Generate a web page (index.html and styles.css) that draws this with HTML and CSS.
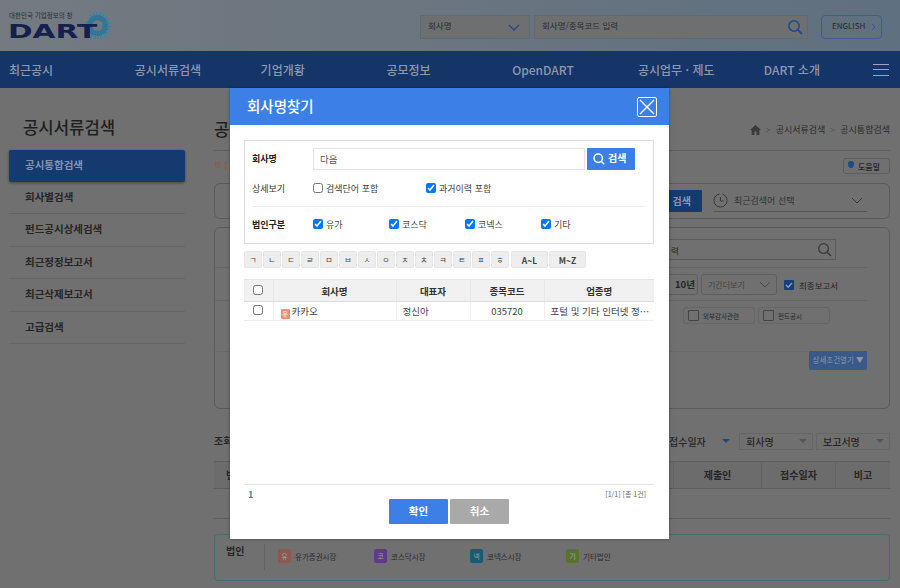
FILE: index.html
```html
<!DOCTYPE html>
<html lang="ko">
  <head>
    <meta charset="UTF-8" />
    <title>회사명찾기</title>
    <link rel="stylesheet" href="styles.css">
  </head>

  <body>
    <div class="page">
      <header class="top">
        <div class="logo">
          <span class="logo-sub">대한민국 기업정보의 창</span>
          <span class="logo-name">DART</span>
          <svg class="logo-sun" viewBox="0 0 26 26">
            <circle cx="13" cy="13" r="11" fill="none" stroke="#2f86ab" stroke-width="3.6" stroke-dasharray="1 1" pathLength="44" transform="rotate(-130 13 13)"/>
            <circle cx="13" cy="13" r="7.5" fill="none" stroke="#23759f" stroke-width="5" stroke-dasharray="1.2 .35" transform="rotate(-70 13 13)"/>
            <path d="M3 2.5A13 13 0 0 0 2 9" fill="none" stroke="#747a80" stroke-width="5"/>
          </svg>
        </div>
        <div class="top-search">
          <div class="top-select"><span>회사명</span>
            <svg width="12" height="7" viewBox="0 0 12 7"><path d="M1 1l5 5 5-5" fill="none" stroke="#1f4b87" stroke-width="1.3"/></svg>
          </div>
          <div class="top-input"><span>회사명/종목코드 입력</span>
            <svg width="16" height="16" viewBox="0 0 16 16"><circle cx="7" cy="7" r="5.2" fill="none" stroke="#1f4b87" stroke-width="1.6"/><path d="M11 11l4 4" stroke="#1f4b87" stroke-width="1.8"/></svg>
          </div>
          <div class="top-lang"><span>ENGLISH</span>
            <svg width="5" height="8" viewBox="0 0 5 8"><path d="M1 1l3 3-3 3" fill="none" stroke="#2c5a96"/></svg>
          </div>
        </div>
      </header>

      <nav class="gnb">
        <a>최근공시</a>
        <a>공시서류검색</a>
        <a>기업개황</a>
        <a>공모정보</a>
        <a>OpenDART</a>
        <a>공시업무 · 제도</a>
        <a>DART 소개</a>
        <span class="burger"><i></i><i></i><i></i></span>
      </nav>

      <div class="content">
        <aside class="side">
          <h2>공시서류검색</h2>
          <ul>
            <li class="on">공시통합검색</li>
            <li>회사별검색</li>
            <li>펀드공시상세검색</li>
            <li>최근정정보고서</li>
            <li>최근삭제보고서</li>
            <li>고급검색</li>
          </ul>
        </aside>

        <main class="main">
          <div class="main-head">
            <h3>공시통합검색</h3>
            <div class="crumbs">
              <svg width="11" height="10" viewBox="0 0 11 10"><path d="M5.5 0L0 5h1.6v5h2.9V6.6h2V10h2.9V5H11z" fill="#3a3a3a"/></svg>
              <em>&gt;</em>공시서류검색<em>&gt;</em>공시통합검색
            </div>
          </div>

          <div class="notice">
            <span class="notice-text">※ [</span>
            <span class="help"><b></b>도움말</span>
          </div>

          <div class="box box-recent">
            <span class="dark-btn">검색</span>
            <div class="recent">
              <svg width="15" height="15" viewBox="0 0 15 15"><circle cx="7.5" cy="7.5" r="6.6" fill="none" stroke="#3a3a3a" stroke-dasharray="30 3"/><path d="M7.5 4v4h3" fill="none" stroke="#3a3a3a"/></svg>
              최근검색어 선택
              <svg class="recent-arrow" width="12" height="7" viewBox="0 0 12 7"><path d="M1 1l5 5 5-5" fill="none" stroke="#3a3a3a"/></svg>
            </div>
          </div>

          <div class="box box-form">
            <div class="form-row form-search">
              <div class="form-input">력
                <svg width="15" height="15" viewBox="0 0 16 16"><circle cx="7" cy="7" r="5.2" fill="none" stroke="#3a3a3a" stroke-width="1.4"/><path d="M11 11l4 4" stroke="#3a3a3a" stroke-width="1.6"/></svg>
              </div>
            </div>
            <div class="form-row form-period">
              <span class="year">10년</span>
              <span class="period">기간더보기
                <svg width="12" height="7" viewBox="0 0 12 7"><path d="M1 1l5 5 5-5" fill="none" stroke="#4c4c4c"/></svg>
              </span>
              <label class="final">
                <svg width="10" height="10" viewBox="0 0 10 10"><rect width="10" height="10" rx="1" fill="#143f80"/><path d="M2 5l2.2 2.2L8 3" fill="none" stroke="#8c99ad" stroke-width="1.5"/></svg>
                최종보고서
              </label>
            </div>
            <div class="form-row form-chips">
              <span class="chip"><i></i>외부감사관련</span>
              <span class="chip"><i></i>펀드공시</span>
            </div>
            <div class="form-more">
              <span>상세조건열기 ▼</span>
            </div>
          </div>

          <div class="sort">
            <span class="sort-label">조회</span>
            <span class="sort-item sort-active">접수일자</span>
            <span class="sort-item">회사명</span>
            <span class="sort-item">보고서명</span>
          </div>

          <div class="result-head">
            <span class="result-first">번</span>
            <span>제출인</span>
            <span>접수일자</span>
            <span>비고</span>
          </div>
          <div class="result-empty"></div>

          <div class="legend">
            <b>법인</b>
            <div class="legend-list">
              <span><i class="mark-y">유</i>유가증권시장</span>
              <span><i class="mark-k">코</i>코스닥시장</span>
              <span><i class="mark-n">넥</i>코넥스시장</span>
              <span><i class="mark-e">기</i>기타법인</span>
            </div>
          </div>
        </main>
      </div>

      <section class="modal">
        <div class="modal-head">
          <h4>회사명찾기</h4>
          <span class="modal-close">
            <svg width="18" height="18" viewBox="0 0 18 18"><path d="M2 2l14 14M16 2L2 16" stroke="#fff" stroke-width="1.4"/></svg>
          </span>
        </div>

        <div class="modal-body">
          <div class="find">
            <div class="find-row find-name">
              <label class="find-label strong">회사명</label>
              <input class="find-input" type="text" value="다음" />
              <button class="find-btn">
                <svg width="12" height="12" viewBox="0 0 16 16"><circle cx="7" cy="7" r="5.6" fill="none" stroke="#fff" stroke-width="2"/><path d="M11 11l4 4" stroke="#fff" stroke-width="2"/></svg>
                <span>검색</span>
              </button>
            </div>
            <div class="find-row find-detail">
              <label class="find-label">상세보기</label>
              <label class="check check-wide"><input type="checkbox" />검색단어 포함</label>
              <label class="check"><input type="checkbox" checked />과거이력 포함</label>
            </div>
            <div class="find-row find-corp">
              <label class="find-label strong">법인구분</label>
              <label class="check check-corp"><input type="checkbox" checked />유가</label>
              <label class="check check-corp"><input type="checkbox" checked />코스닥</label>
              <label class="check check-corp"><input type="checkbox" checked />코넥스</label>
              <label class="check check-corp"><input type="checkbox" checked />기타</label>
            </div>
          </div>

          <div class="letters">
            <span>ㄱ</span><span>ㄴ</span><span>ㄷ</span><span>ㄹ</span><span>ㅁ</span><span>ㅂ</span><span>ㅅ</span><span>ㅇ</span><span>ㅈ</span><span>ㅊ</span><span>ㅋ</span><span>ㅌ</span><span>ㅍ</span><span>ㅎ</span>
            <span class="wide first">A~L</span><span class="wide">M~Z</span>
          </div>

          <div class="list">
            <table>
              <tr>
                <th class="col-check"><input type="checkbox" /></th>
                <th class="col-name">회사명</th>
                <th class="col-ceo">대표자</th>
                <th class="col-code">종목코드</th>
                <th>업종명</th>
              </tr>
              <tr>
                <td class="col-check"><input type="checkbox" /></td>
                <td class="td-name"><i class="badge">유</i>카카오</td>
                <td>정신아</td>
                <td class="td-center">035720</td>
                <td>포털 및 기타 인터넷 정…</td>
              </tr>
            </table>
          </div>

          <div class="paging">
            <b>1</b>
            <span>[1/1] [총 1건]</span>
          </div>

          <div class="actions">
            <button class="ok">확인</button>
            <button class="cancel">취소</button>
          </div>
        </div>
      </section>
    </div>
  </body>
</html>
```

FILE: styles.css
```css
* {
  margin: 0;
  padding: 0;
  box-sizing: border-box;
  font-family: "Noto Sans CJK KR", "Noto Sans", sans-serif;
}

html,
body {
  height: 588px;
  overflow: hidden;
}

i,
em {
  font-style: normal;
}

ul {
  list-style: none;
}

/* page behind the modal, colours are already the dimmed ones */
.page {
  position: relative;
  height: 588px;
  overflow: hidden;
  background: #707070;
  color: #262626;
}

.top {
  height: 51px;
  display: flex;
  justify-content: space-between;
  padding: 0 18px 0 9px;
  background: linear-gradient(90deg, #747a80, #5f7080);
}

.logo {
  position: relative;
  width: 110px;
  padding-top: 11px;
}

.logo-sub {
  display: block;
  font-size: 6.5px;
  line-height: 9px;
  color: #2b2f36;
  white-space: nowrap;
}

.logo-name {
  display: block;
  position: relative;
  z-index: 1;
  margin: 2px 0 0 -1px;
  font-family: "DejaVu Sans", sans-serif;
  font-size: 20px;
  line-height: 19px;
  font-weight: bold;
  color: #14204f;
  transform: scaleX(1.48);
  transform-origin: left;
}

.logo-sun {
  position: absolute;
  left: 75px;
  top: 12px;
  width: 27px;
  height: 27px;
}

.top-search {
  display: flex;
  padding-top: 15px;
}

.top-select,
.top-input {
  height: 24px;
  display: flex;
  align-items: center;
  justify-content: space-between;
  font-size: 8.5px;
  color: #2b2b2b;
  background: #6d6f70;
  border: 1px solid #5f6a75;
}

.top-select span,
.top-input span,
.top-lang span {
  margin-top: -4px;
}

.top-select {
  width: 110px;
  padding: 0 9px 0 7px;
  margin-right: 4px;
}

.top-input {
  width: 274px;
  padding: 0 4px 0 7px;
  margin-right: 13px;
}

.top-lang {
  width: 61px;
  height: 24px;
  display: flex;
  align-items: center;
  gap: 6px;
  padding-left: 10px;
  font-size: 8px;
  color: #26292c;
  border: 1px solid #3f5f88;
  border-radius: 4px;
}

.gnb {
  height: 37px;
  display: grid;
  grid-template-columns: repeat(6, 125.8px) 100px 1fr;
  align-items: center;
  padding: 0 11px 0 9px;
  background: #153468;
  color: #8c99ad;
  font-size: 12px;
  font-weight: 500;
}

.burger {
  justify-self: end;
  display: flex;
  flex-direction: column;
  gap: 4.5px;
  width: 16px;
}

.burger i {
  height: 1px;
  background: #9aa6b8;
}

.content {
  display: flex;
}

.side {
  width: 176px;
  margin-left: 9px;
  flex: none;
}

.side h2 {
  height: 62px;
  padding: 26px 0 0 14px;
  font-size: 16.7px;
  line-height: 26px;
  font-weight: 500;
  color: #1f1f1f;
}

.side li {
  height: 32.4px;
  padding-left: 16px;
  font-size: 10.5px;
  line-height: 29px;
  font-weight: 700;
  color: #262626;
  border-bottom: 1px solid #656565;
}

.side li.on {
  height: 32px;
  color: #8694ab;
  background: #153a70;
  border: 0;
  border-radius: 2px;
  box-shadow: 0 1px 3px rgba(0, 0, 0, 0.4);
}

.main {
  width: 676px;
  margin-left: 29px;
  flex: none;
}

.main-head {
  height: 63px;
  display: flex;
  justify-content: space-between;
  padding-top: 27px;
  border-bottom: 1px solid #5e5e5e;
}

.main-head h3 {
  font-size: 16.7px;
  line-height: 28px;
  font-weight: 500;
  color: #1f1f1f;
}

.crumbs {
  display: flex;
  align-items: center;
  height: 28px;
  padding-top: 1px;
  font-size: 9px;
  color: #2b2b2b;
}

.crumbs em {
  margin: 0 5px;
  color: #555;
}

.notice {
  height: 32px;
  display: flex;
  justify-content: space-between;
  padding-top: 7px;
}

.notice-text {
  font-size: 8.5px;
  line-height: 13px;
  font-weight: 700;
  color: #9a5520;
}

.help {
  width: 47px;
  height: 16px;
  display: flex;
  align-items: center;
  gap: 4px;
  padding-left: 4px;
  font-size: 8px;
  font-weight: 500;
  border: 1px solid #5e5e5e;
  border-radius: 3px;
}

.help b {
  width: 6px;
  height: 7px;
  margin-top: -3px;
  background: #1b4a8c;
  border-radius: 50% 50% 50% 50% / 40% 40% 70% 70%;
}

.box {
  border: 1px solid #5a5a5a;
  border-radius: 6px;
}

.box-recent {
  height: 36px;
  display: flex;
  justify-content: flex-end;
  padding: 6px 22px 0 0;
}

.dark-btn {
  width: 50px;
  height: 22px;
  margin-right: 11px;
  padding-right: 11px;
  text-align: right;
  font-size: 10px;
  line-height: 21px;
  font-weight: 700;
  color: #8c99ad;
  background: #153a70;
  border-radius: 1px;
}

.recent {
  width: 154px;
  height: 22px;
  display: flex;
  align-items: center;
  gap: 6px;
  font-size: 9px;
  color: #333;
  border-bottom: 1px solid #555;
}

.recent-arrow {
  margin-left: auto;
  margin-right: 4px;
}

.box-form {
  height: 182px;
  margin-top: 8px;
  padding-top: 11px;
}

.form-row {
  display: flex;
  justify-content: flex-end;
  margin-right: 22px;
  border-bottom: 1px solid #656565;
}

.form-search {
  height: 29px;
}

.form-input {
  width: 180px;
  height: 21px;
  display: flex;
  align-items: center;
  justify-content: space-between;
  margin-right: 31px;
  padding: 0 3px 0 14px;
  font-size: 8.5px;
  border: 1px solid #5a5a5a;
}

.form-period {
  height: 33px;
  padding-top: 6px;
  align-items: flex-start;
  justify-content: flex-start;
  padding-left: 451px;
}

.year {
  width: 32px;
  height: 21px;
  margin-right: 3px;
  padding-left: 6px;
  font-size: 9.5px;
  line-height: 18px;
  font-weight: 700;
  text-align: center;
  border: 1px solid #5e5e5e;
  border-radius: 3px;
}

.period {
  width: 76px;
  height: 21px;
  display: flex;
  align-items: center;
  justify-content: space-between;
  padding: 0 5px 0 6px;
  font-size: 8px;
  color: #444;
  border: 1px solid #5e5e5e;
  border-radius: 3px;
}

.final {
  display: flex;
  align-items: center;
  height: 21px;
  margin-left: 7px;
  gap: 5px;
  font-size: 8.5px;
  white-space: nowrap;
}

.form-chips {
  height: 50px;
  padding-top: 6px;
  gap: 3px;
  margin-right: 59px;
  border: 0;
}

.chip {
  width: 72px;
  height: 17px;
  display: flex;
  align-items: center;
  gap: 4px;
  padding-left: 4px;
  font-size: 6.5px;
  border: 1px solid #666;
  border-radius: 3px;
}

.chip i {
  width: 11px;
  height: 11px;
  border: 1px solid #444;
  border-radius: 1px;
}

.form-more {
  margin-right: 22px;
  height: 19px;
  display: flex;
  justify-content: flex-end;
  border-top: 1px solid #5d6b7c;
}

.form-more span {
  width: 58px;
  margin-top: -1px;
  font-size: 7.5px;
  line-height: 18px;
  text-align: center;
  color: #8996a9;
  background: #38598a;
  border-radius: 0 0 2px 2px;
}

.sort {
  height: 17px;
  display: flex;
  gap: 3px;
  margin-top: 24px;
}

.sort-label {
  margin-right: auto;
  font-size: 10px;
  line-height: 15px;
  font-weight: 700;
}

.sort-item {
  position: relative;
  width: 74px;
  padding-left: 6px;
  font-size: 10px;
  line-height: 15px;
  font-weight: 500;
  border: 1px solid #666;
}

.sort-item::after {
  content: "";
  position: absolute;
  right: 5px;
  top: 5px;
  border: 4px solid transparent;
  border-top: 4px solid #555;
}

.sort-active {
  border-color: transparent;
}

.sort-active::after {
  border-top-color: #1b4a8c;
}

.result-head {
  height: 28px;
  display: grid;
  grid-template-columns: 459px 88px 74px 55px;
  margin-top: 11px;
  font-size: 10px;
  line-height: 25px;
  font-weight: 700;
  text-align: center;
  border-top: 1px solid #5e5e5e;
  border-bottom: 1px solid #5e5e5e;
  background: #6c6c6c;
}

.result-head span {
  border-left: 1px solid #636363;
}

.result-head .result-first {
  padding-left: 12px;
  border: 0;
  text-align: left;
}

.result-empty {
  height: 30px;
  border-bottom: 1px solid #5e5e5e;
}

.legend {
  height: 47px;
  display: flex;
  margin-top: 15px;
  padding: 9px 0 0 11px;
  border: 1px solid #4a6a76;
  border-radius: 4px;
}

.legend b {
  width: 38px;
  font-size: 10px;
  line-height: 14px;
  font-weight: 700;
}

.legend-list {
  height: 26px;
  display: flex;
  padding-left: 13px;
  border-left: 1px solid #636363;
}

.legend-list span {
  width: 96px;
  height: 14px;
  margin-top: 5px;
  display: flex;
  align-items: center;
  gap: 4px;
  font-size: 7.5px;
  color: #2b2b2b;
}

.legend-list i {
  width: 13px;
  height: 14px;
  text-align: center;
  font-size: 7px;
  line-height: 14px;
  color: #a0a0a0;
  border-radius: 2px;
}

.mark-y {
  background: #8a5a4c;
}

.mark-k {
  background: #5f3a85;
}

.mark-n {
  background: #1a5a73;
}

.mark-e {
  background: #587232;
}

/* modal */
.modal {
  position: absolute;
  left: 230px;
  top: 88px;
  width: 439px;
  height: 451px;
  background: #fff;
  box-shadow: 0 0 3px rgba(0, 0, 0, 0.4);
}

.modal-head {
  height: 37px;
  display: flex;
  align-items: center;
  justify-content: space-between;
  padding: 0 12px 0 17px;
  background: #3c7fe6;
}

.modal-head h4 {
  margin-top: -2px;
  font-size: 14.5px;
  font-weight: 500;
  color: #fff;
}

.modal-close {
  width: 20px;
  height: 20px;
  display: flex;
  align-items: center;
  justify-content: center;
  border: 1px solid #fff;
  border-radius: 2px;
}

.modal-body {
  padding: 15px 15px 0 14px;
}

.find {
  height: 104px;
  padding: 7px 7px 0 7px;
  border: 1px solid #ddd;
}

.find-row {
  display: flex;
  align-items: center;
  font-size: 9px;
  color: #333;
}

.find-name {
  height: 22px;
}

.find-detail {
  height: 37px;
  border-bottom: 1px solid #eee;
}

.find-corp {
  height: 34px;
}

.find-label {
  width: 61px;
  font-size: 9px;
  color: #333;
}

.find-name .find-label {
  margin-top: -2px;
}

.strong {
  font-weight: 700;
  color: #222;
}

.find-input {
  width: 272px;
  height: 22px;
  padding-left: 6px;
  font-size: 9.5px;
  color: #555;
  border: 1px solid #e4e4e4;
  outline: 0;
}

.find-btn {
  width: 48px;
  height: 22px;
  margin-left: 2px;
  display: flex;
  align-items: center;
  gap: 3px;
  padding-left: 6px;
  font-size: 10px;
  font-weight: 700;
  color: #fff;
  background: #3c7fe6;
  border: 0;
  border-radius: 1px;
}

.find-btn span {
  margin-top: -3px;
}

.check {
  display: flex;
  align-items: center;
  gap: 3px;
  color: #444;
}

.check input,
.list input {
  width: 10px;
  height: 10px;
  margin: 0;
}

.check-wide {
  width: 113px;
}

.check-corp {
  width: 76px;
}

.letters {
  display: flex;
  gap: 1px;
  margin-top: 7px;
}

.letters span {
  width: 18px;
  height: 17px;
  text-align: center;
  font-size: 8px;
  line-height: 16px;
  color: #444;
  background: #eee;
  border: 1px solid #e6e6e6;
  border-radius: 2px;
}

.letters .wide {
  width: 37px;
  font-size: 8.5px;
  font-weight: 700;
}

.letters .first {
  margin-left: 1px;
}

.list {
  height: 206px;
  margin-top: 11px;
  border-bottom: 1px solid #e4e4e4;
}

table {
  width: 410px;
  table-layout: fixed;
  border-collapse: collapse;
  font-size: 9.5px;
  color: #444;
}

th {
  height: 22px;
  font-size: 9.5px;
  font-weight: 700;
  color: #333;
  background: #f1f1f1;
  border-top: 1px solid #e4e4e4;
  border-bottom: 1px solid #ddd;
  border-left: 1px solid #e8e8e8;
}

td {
  height: 19px;
  padding-left: 6px;
  border-bottom: 1px solid #eee;
  border-left: 1px solid #eee;
  white-space: nowrap;
}

th:first-child,
td:first-child {
  border-left: 0;
}

.col-check {
  width: 29px;
  padding: 0;
  text-align: center;
}

.col-name {
  width: 123px;
}

.col-ceo,
.col-code {
  width: 74px;
}

.td-center {
  padding: 0;
  text-align: center;
}

.td-name {
  padding-left: 7px;
}

.badge {
  display: inline-block;
  width: 9px;
  height: 10px;
  margin-right: 2px;
  vertical-align: -1px;
  text-align: center;
  font-size: 6px;
  line-height: 10px;
  color: #fff;
  background: #ee8e78;
  border-radius: 1px;
}

.paging {
  display: flex;
  justify-content: space-between;
  height: 14px;
  padding: 3px 8px 0 4px;
  font-size: 7px;
  line-height: 13px;
  color: #666;
}

.paging b {
  font-size: 9px;
  color: #2b8cc4;
}

.actions {
  display: flex;
  justify-content: center;
  gap: 2px;
}

.actions button {
  width: 59px;
  height: 25px;
  padding-bottom: 3px;
  font-size: 10.5px;
  font-weight: 700;
  color: #fff;
  border: 0;
  border-radius: 1px;
}

.ok {
  background: #3c7fe6;
}

.cancel {
  background: #a9a9a9;
}
```
